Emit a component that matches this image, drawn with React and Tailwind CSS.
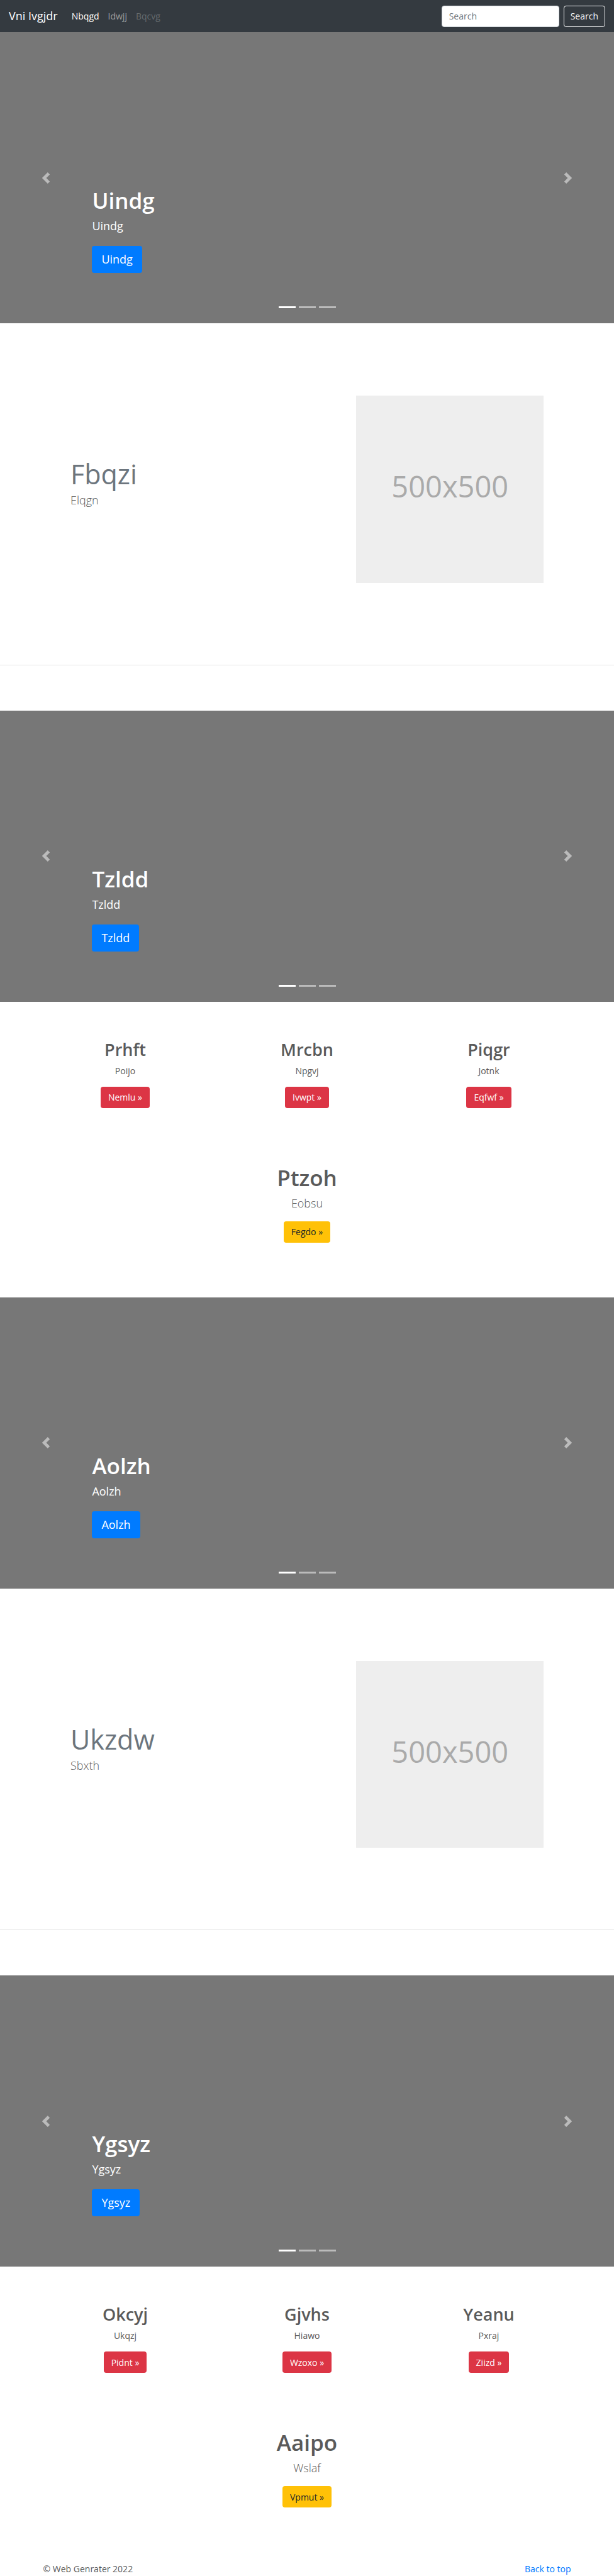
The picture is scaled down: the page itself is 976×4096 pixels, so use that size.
import React from "react";

const navLinks = [
  { label: "Nbqgd", tone: "text-white" },
  { label: "Idwjj", tone: "text-white/50" },
  { label: "Bqcvg", tone: "text-white/25" },
];

const firstCards = [
  { title: "Prhft", text: "Poijo", action: "Nemlu" },
  { title: "Mrcbn", text: "Npgvj", action: "Ivwpt" },
  { title: "Piqgr", text: "Jotnk", action: "Eqfwf" },
];

const secondCards = [
  { title: "Okcyj", text: "Ukqzj", action: "Pidnt" },
  { title: "Gjvhs", text: "Hiawo", action: "Wzoxo" },
  { title: "Yeanu", text: "Pxraj", action: "Ziizd" },
];

function Navbar() {
  return (
    <header className="flex min-h-[51px] items-center bg-[#343a40] px-[14px]">
      <a href="#" className="mr-[22px] text-[18px] leading-[27px] text-white">
        Vni Ivgjdr
      </a>
      <nav className="flex flex-1 gap-[14px]">
        {navLinks.map((link) => (
          <a key={link.label} href="#" className={link.tone}>
            {link.label}
          </a>
        ))}
      </nav>
      <form className="flex gap-[7px]" onSubmit={(e) => e.preventDefault()}>
        <input
          type="text"
          placeholder="Search"
          aria-label="Search"
          className="h-[34px] w-[187px] rounded border border-[#ced4da] bg-white px-[11px] text-[#495057] placeholder:text-[#6c757d]"
        />
        <button type="submit" className="h-[34px] rounded border border-[#f8f9fa] px-[10px] text-[#f8f9fa]">
          Search
        </button>
      </form>
    </header>
  );
}

function Control({ label, path }) {
  return (
    <button type="button" aria-label={label} className="flex w-[15%] items-center justify-center opacity-50">
      <svg viewBox="0 0 8 8" className="size-[18px]" fill="#fff">
        <path d={path} />
      </svg>
    </button>
  );
}

function Hero({ title }) {
  return (
    <section className="relative flex h-[463px] bg-[#777]">
      <Control label="Previous" path="M5.25 0l-4 4 4 4 1.5-1.5L4.25 4l2.5-2.5L5.25 0z" />
      <div className="flex flex-1 flex-col items-start justify-end pb-20 text-white">
        <h1 className="mb-[5px] text-[35px] leading-[45px] font-semibold">{title}</h1>
        <p className="mb-[18px] text-[18px] leading-[27px]">{title}</p>
        <a
          href="#"
          className="flex h-[43px] items-center rounded-[4px] bg-[#007bff] px-[15px] text-[18px] leading-[27px]"
        >
          {title}
        </a>
      </div>
      <Control label="Next" path="M2.75 0l-1.5 1.5L3.75 4l-2.5 2.5L2.75 8l4-4-4-4z" />
      <div className="absolute inset-x-0 bottom-6 flex justify-center gap-[5px]">
        <button type="button" aria-label="Slide 1" className="h-[3px] w-[27px] bg-white" />
        <button type="button" aria-label="Slide 2" className="h-[3px] w-[27px] bg-white/50" />
        <button type="button" aria-label="Slide 3" className="h-[3px] w-[27px] bg-white/50" />
      </div>
    </section>
  );
}

function Featurette({ title, text }) {
  return (
    <section>
      <div className="mx-auto grid max-w-[752px] grid-cols-12 gap-x-[27px] pt-[115px]">
        <div className="col-span-7 pt-[101px]">
          <h2 className="mb-[5px] text-[43px] leading-[47px] text-[#6c757d]">{title}</h2>
          <p className="text-[18px] leading-[27px] font-light">{text}</p>
        </div>
        <div className="col-span-5 flex aspect-square items-center justify-center bg-[#eee] pb-2 text-[47px] text-[#aaa]">
          500x500
        </div>
      </div>
      <hr className="mt-[130px] mb-[72px] border-t border-black/10" />
    </section>
  );
}

function Cards({ cards, title, text, action }) {
  return (
    <section className="mx-auto max-w-[867px] pt-[57px] pb-[87px] text-center">
      <div className="mb-[88px] grid grid-cols-3">
        {cards.map((card) => (
          <article key={card.title} className="flex flex-col items-center">
            <h2 className="mb-[5px] text-[27px] leading-[37px] font-semibold">{card.title}</h2>
            <p className="mb-[14px] leading-[22px]">{card.text}</p>
            <a href="#" className="flex h-[34px] items-center rounded bg-[#dc3545] px-3 text-white">
              {card.action} »
            </a>
          </article>
        ))}
      </div>
      <div className="flex flex-col items-center">
        <h1 className="mb-[5px] text-[35px] leading-[45px] font-semibold">{title}</h1>
        <p className="mb-[15px] text-[18px] leading-[27px] font-light">{text}</p>
        <a href="#" className="flex h-[34px] items-center rounded bg-[#ffc107] px-3 text-[#212529]">
          {action} »
        </a>
      </div>
    </section>
  );
}

export default function App() {
  return (
    <div className="bg-white font-['Open_Sans','Noto_Sans',sans-serif] text-[14px] leading-[21px] text-[#5a5a5a]">
      <Navbar />
      <main>
        <Hero title="Uindg" />
        <Featurette title="Fbqzi" text="Elqgn" />
        <Hero title="Tzldd" />
        <Cards cards={firstCards} title="Ptzoh" text="Eobsu" action="Fegdo" />
        <Hero title="Aolzh" />
        <Featurette title="Ukzdw" text="Sbxth" />
        <Hero title="Ygsyz" />
        <Cards cards={secondCards} title="Aaipo" text="Wslaf" action="Vpmut" />
      </main>
      <footer className="mx-auto flex max-w-[867px] justify-between px-[14px]">
        <p>© Web Genrater 2022</p>
        <a href="#" className="text-[#007bff]">
          Back to top
        </a>
      </footer>
    </div>
  );
}
